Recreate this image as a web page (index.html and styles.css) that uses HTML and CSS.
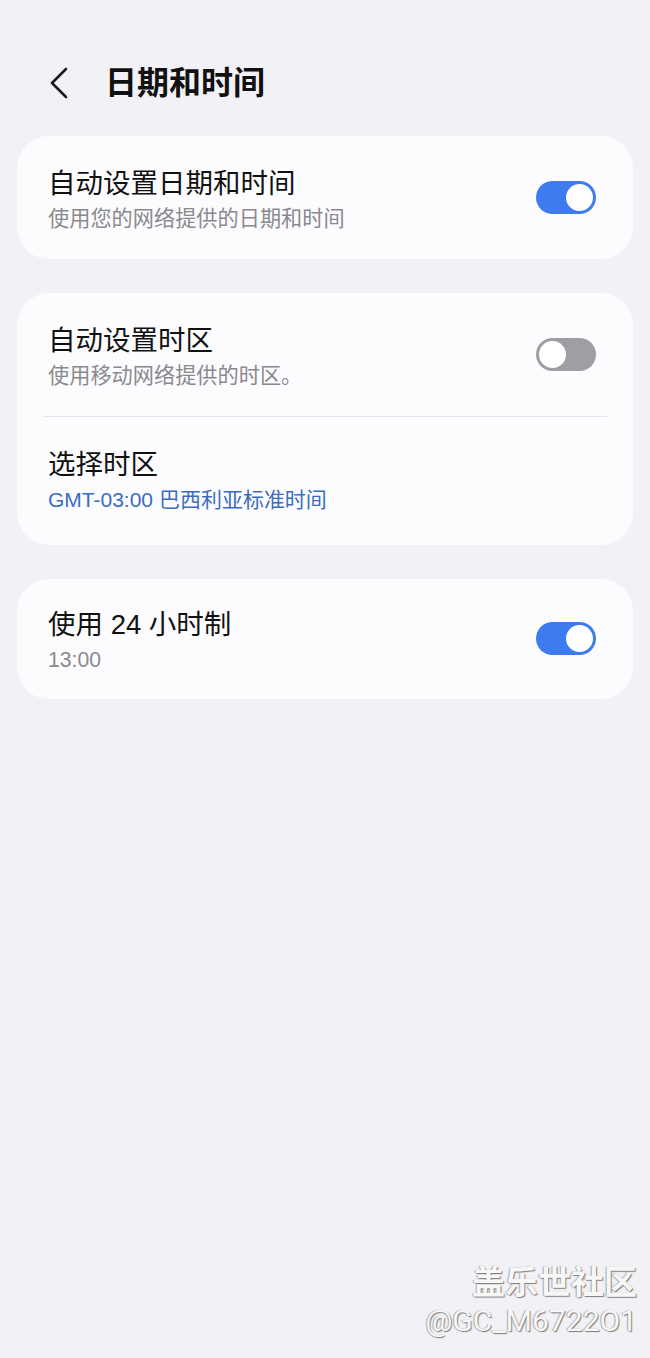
FILE: index.html
```html
<!DOCTYPE html>
<html lang="zh-CN">
<head>
  <meta charset="UTF-8" />
  <meta name="viewport" content="width=device-width, initial-scale=1.0" />
  <title>日期和时间</title>
  <link rel="stylesheet" href="styles.css">
</head>
<body>
  <header class="top-bar">
    <svg class="back" width="20" height="32" viewBox="0 0 20 32" aria-hidden="true">
      <path d="M17 2 L3 16 L17 30" fill="none" stroke="#1a1a1a" stroke-width="2.6" stroke-linecap="round" stroke-linejoin="round"/>
    </svg>
    <h1>日期和时间</h1>
  </header>

  <main class="list">
    <section class="card">
      <div class="row">
        <div class="text">
          <div class="title">自动设置日期和时间</div>
          <div class="sub">使用您的网络提供的日期和时间</div>
        </div>
        <span class="switch on"><span class="thumb"></span></span>
      </div>
    </section>

    <section class="card group">
      <div class="row">
        <div class="text">
          <div class="title">自动设置时区</div>
          <div class="sub">使用移动网络提供的时区。</div>
        </div>
        <span class="switch"><span class="thumb"></span></span>
      </div>
      <div class="divider"></div>
      <div class="row">
        <div class="text">
          <div class="title">选择时区</div>
          <div class="sub link">GMT-03:00 巴西利亚标准时间</div>
        </div>
      </div>
    </section>

    <section class="card short">
      <div class="row">
        <div class="text">
          <div class="title">使用 24 小时制</div>
          <div class="sub">13:00</div>
        </div>
        <span class="switch on"><span class="thumb"></span></span>
      </div>
    </section>
  </main>

  <div class="watermark">
    <div class="wm-name">盖乐世社区</div>
    <div class="wm-user">@GC_M6722O1</div>
  </div>
</body>
</html>
```

FILE: styles.css
```css
body {
  margin: 0;
  min-height: 1358px;
  position: relative;
  background: #f2f2f6;
  font-family: "Liberation Sans", "Noto Sans CJK SC", sans-serif;
  color: #111;
}
.top-bar {
  display: flex;
  align-items: center;
  gap: 36px;
  height: 136px;
  padding: 63px 0 33px 49px;
  box-sizing: border-box;
}
.back {
  display: block;
}
.top-bar h1 {
  margin: 0;
  font-size: 32px;
  font-weight: 700;
  line-height: 40px;
  color: #111;
}
.list {
  display: flex;
  flex-direction: column;
  gap: 34px;
  padding: 0 17px;
}
.card {
  background: #fcfcfe;
  border-radius: 32px;
}
.card.group {
  padding: 0 0 5px;
}
.row {
  display: flex;
  align-items: center;
  justify-content: space-between;
  padding: 31px 37px 26px 31px;
}
.card.short .row {
  padding: 29px 37px 25px 31px;
}
.text {
  display: flex;
  flex-direction: column;
  gap: 4px;
}
.title {
  font-size: 27.5px;
  line-height: 34px;
}
.sub {
  font-size: 21.2px;
  line-height: 28px;
  color: #8a8a8e;
}
.sub.link {
  font-size: 21px;
  color: #3b6cc0;
}
.divider {
  height: 1px;
  margin: 0 26px;
  background: #e3e3e8;
}
.switch {
  display: flex;
  align-items: center;
  width: 60px;
  height: 33px;
  padding: 3px;
  box-sizing: border-box;
  border-radius: 17px;
  background: #9e9ea3;
  margin-top: -6px;
}
.switch.on {
  background: #3e7bef;
  justify-content: flex-end;
}
.thumb {
  width: 27px;
  height: 27px;
  border-radius: 50%;
  background: #fff;
}
.watermark {
  position: absolute;
  right: 13px;
  bottom: 18px;
  text-align: right;
  color: #f7f7f7;
  text-shadow: 1px 1px 1px #7c7c7c, -1px 0 1px #a8a8a8;
}
.wm-name {
  font-family: "Noto Sans CJK SC", sans-serif;
  font-size: 33px;
  font-weight: 700;
  line-height: 44px;
}
.wm-user {
  font-family: Roboto, sans-serif;
  font-size: 30px;
  line-height: 38px;
}
```
